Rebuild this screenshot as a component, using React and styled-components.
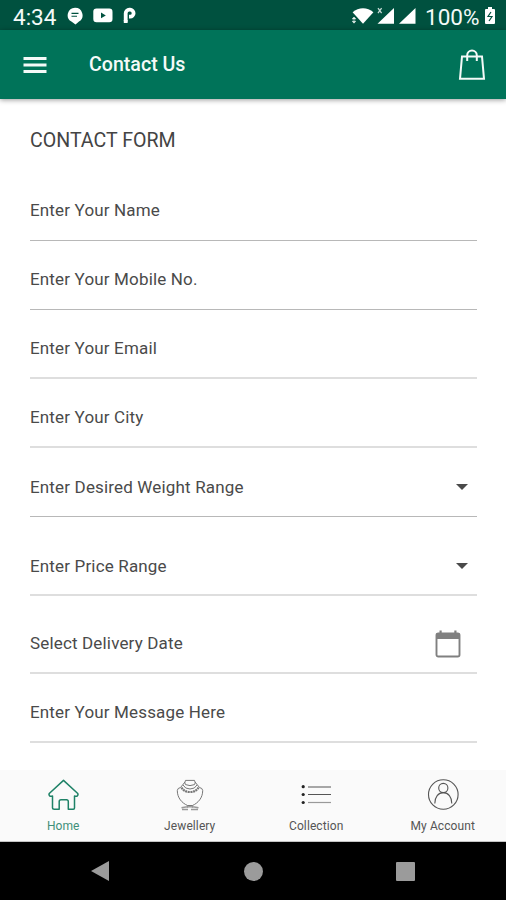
import styled, { createGlobalStyle } from "styled-components";

const fields = [
  { label: "Enter Your Name" },
  { label: "Enter Your Mobile No." },
  { label: "Enter Your Email", soft: true },
  { label: "Enter Your City", soft: true },
  { label: "Enter Desired Weight Range", type: "select" },
  { label: "Enter Price Range", type: "select", height: 79, soft: true },
  { label: "Select Delivery Date", type: "date", height: 78, soft: true },
  { label: "Enter Your Message Here", soft: true },
];

const tabs = [
  { label: "Home", icon: HomeIcon, active: true },
  { label: "Jewellery", icon: JewelleryIcon },
  { label: "Collection", icon: CollectionIcon },
  { label: "My Account", icon: AccountIcon },
];

function ChatIcon() {
  return (
    <svg width="16" height="18" viewBox="0 0 16 18">
      <path d="M8 .8a7.4 7.4 0 0 0-3.6 13.8l4.1 2.9 3.500-3A7.400 7.400 0 0 0 8 .8z" fill="#fff" />
      <path d="M4.500 6.400h7M4.500 9.200h5.500" stroke="#00513f" strokeWidth="1.100" />
    </svg>
  );
}

function VideoIcon() {
  return (
    <svg width="20" height="15" viewBox="0 0 20 15">
      <rect x="0.3" y="0.5" width="19.2" height="13.8" rx="3.2" fill="#fff" />
      <path d="M8 4.6v5.6l4.8-2.8z" fill="#00513f" />
    </svg>
  );
}

function PayIcon() {
  return (
    <svg width="13" height="17" viewBox="0 0 13 17" fill="none" stroke="#fff" strokeWidth="3.800">
      <path d="M2.700 16V6.300A3.600 3.600 0 0 1 6.300 2.700h.8a3.500 3.500 0 0 1 0 7H6" />
      <path d="M.8 13h3.800v1q0 2-1.900 2T.8 14z" fill="#fff" stroke="none" />
    </svg>
  );
}

function SignalIcons() {
  return (
    <svg width="66" height="18" viewBox="0 0 66 18">
      <path d="M1.6 5.2C7.6-.1 16.4-.1 22.4 5.2L12 16.8z" fill="#fff" />
      <path d="M3 10.5v5M1.2 12l1.8-2 1.8 2zM1.2 14.2l1.8 2 1.8-2z" fill="#fff" stroke="#d7e5e1" strokeWidth=".6" />
      <path d="M43 1v15.8H26.5zM64.500 1v15.800H48z" fill="#fff" />
      <path d="M27 1.200l3.600 5M30.600 1.200L27 6.200" stroke="#c7dad5" strokeWidth="1.300" />
    </svg>
  );
}

function BatteryIcon() {
  return (
    <svg width="12" height="18" viewBox="0 0 12 18">
      <path d="M4 0h4v2h2a1 1 0 0 1 1 1v13a1 1 0 0 1-1 1H2a1 1 0 0 1-1-1V3a1 1 0 0 1 1-1h2z" fill="#fff" />
      <path d="M7 5L4 9.500h4L5 14" fill="none" stroke="#00513f" strokeWidth="1.200" />
    </svg>
  );
}

function MenuIcon() {
  return (
    <svg width="24" height="18" viewBox="0 0 24 18">
      <path d="M.500 2.500h23M.500 9h23M.500 15.500h23" stroke="#f4faf8" strokeWidth="2.800" />
    </svg>
  );
}

function BagIcon() {
  return (
    <svg width="28" height="32" viewBox="0 0 28 32" fill="none" stroke="#f4faf8" strokeWidth="2">
      <path d="M4 7.500h20L26 29.800H2z" />
      <path d="M9.200 12V6.300a4.800 4.800 0 0 1 9.600 0V12" />
    </svg>
  );
}

function CalendarIcon() {
  return (
    <svg width="26" height="28" viewBox="0 0 26 28">
      <rect x="1.500" y="3.500" width="23" height="23" rx="1.800" fill="none" stroke="#808080" strokeWidth="1.900" />
      <path d="M1 3.500h24V9H1z" fill="#808080" />
      <path d="M5.600.500v3.500M20.400.500v3.500" stroke="#808080" strokeWidth="2.200" />
    </svg>
  );
}

function HomeIcon() {
  return (
    <svg width="32" height="32" viewBox="0 0 32 32" fill="none" stroke="#1f8267" strokeWidth="1.500" strokeLinejoin="round">
      <path d="M16.500 1.400L30.500 14.300q1 1.300 0 2.400t-3 .300V29q0 1.200-1.200 1.200h-5V22.500q0-1.800-1.800-1.800H14q-1.800 0-1.800 1.800v7.700h-5Q5.500 30.200 5.500 29V17q-2 .8-3-.3t0-2.400z" />
    </svg>
  );
}

function JewelleryIcon() {
  return (
    <svg width="32" height="32" viewBox="0 0 32 32" fill="none" stroke="#777" strokeWidth="1">
      <path d="M11.500 1.400h9M11.500 1.400q-1.500 2.600 0 4.200q4.500 2 9 0q1.500-1.600 0-4.200" />
      <path d="M11 3L6.500 8.500q-3 .500-3.200 3C3.300 19 8 24 13.500 26.500h5C24 24 28.700 19 28.700 11.500Q28.500 9 25.500 8.500L21 3" />
      <path d="M7.500 8.500Q10 13 16 13t8.500-4.500" strokeWidth="2.200" strokeDasharray="2 .6" />
      <path d="M9 6q2 4 7 4t7-4" />
      <path d="M13.500 26.500v2M18.500 26.500v2" />
      <path d="M7.500 28.700q8.500-2 17 0M8 30.500h6M17 30.500h7" strokeWidth="1.500" stroke="#999" />
    </svg>
  );
}

function CollectionIcon() {
  return (
    <svg width="32" height="32" viewBox="0 0 32 32" stroke="#555" strokeWidth="1.200">
      <path d="M8 8h23M8 15.500h23" />
      <path d="M8 23.500h23" stroke="#999" />
      <g fill="#222" stroke="none">
        <circle cx="3.200" cy="7.700" r="1.600" />
        <circle cx="3.200" cy="15.500" r="1.600" />
        <circle cx="3.200" cy="23.500" r="1.600" />
      </g>
    </svg>
  );
}

function AccountIcon() {
  return (
    <svg width="32" height="32" viewBox="0 0 32 32" fill="none" stroke="#555" strokeWidth="1.100">
      <circle cx="16.300" cy="15.500" r="14.800" />
      <circle cx="16.300" cy="9" r="4.600" />
      <path d="M7.800 24.500c0-6.500 3.500-10.900 8.500-10.900s8.500 4.400 8.500 10.900" />
    </svg>
  );
}

const Field = ({ label, type, height, soft }) => (
  <Row $height={height} $soft={soft} $select={type === "select"}>
    <Label>{label}</Label>
    {type === "select" && <Caret />}
    {type === "date" && (
      <DateIcon>
        <CalendarIcon />
      </DateIcon>
    )}
  </Row>
);

const App = () => {
  return (
    <Screen>
      <GlobalStyle />
      <StatusBar>
        <Clock>4:34</Clock>
        <Notifications>
          <ChatIcon />
          <VideoIcon />
          <PayIcon />
        </Notifications>
        <SignalIcons />
        <Percent>100%</Percent>
        <BatteryIcon />
      </StatusBar>
      <AppBar>
        <MenuIcon />
        <Title>Contact Us</Title>
        <BagIcon />
      </AppBar>
      <Form>
        <Heading>CONTACT FORM</Heading>
        {fields.map((field) => (
          <Field key={field.label} {...field} />
        ))}
      </Form>
      <TabBar>
        {tabs.map(({ label, icon: Icon, active }) => (
          <Tab key={label} $active={active}>
            <Icon />
            <TabLabel>{label}</TabLabel>
          </Tab>
        ))}
      </TabBar>
      <SystemBar>
        <svg width="18" height="22" viewBox="0 0 18 22">
          <path d="M18 1v20L0 11z" fill="#9b9b9b" />
        </svg>
        <RoundKey />
        <SquareKey />
      </SystemBar>
    </Screen>
  );
};

const GlobalStyle = createGlobalStyle`
  * {
    box-sizing: border-box;
  }
  body {
    margin: 0;
    background: #fff;
    font-family: Roboto, sans-serif;
  }
  svg {
    display: block;
    flex: none;
  }
`;

const Screen = styled.div`
  display: flex;
  flex-direction: column;
  height: 900px;
  overflow: hidden;
`;

const StatusBar = styled.div`
  display: flex;
  align-items: center;
  height: 30px;
  padding: 1px 10px 0 13px;
  background: #00513f;
  color: #f4faf8;
`;

const Clock = styled.span`
  width: 54px;
  padding-top: 2px;
  font-size: 22.5px;
  line-height: 28px;
`;

const Notifications = styled.div`
  display: flex;
  flex: 1;
  align-items: center;
  gap: 10px;
`;

const Percent = styled.span`
  width: 59px;
  margin-left: 8px;
  padding-top: 2px;
  font-size: 22.5px;
  line-height: 28px;
`;

const AppBar = styled.header`
  display: flex;
  align-items: center;
  height: 69px;
  padding: 0 20px 0 23px;
  background: #007359;
  box-shadow: 0 1px 5px rgba(0, 0, 0, 0.4);
  z-index: 1;
`;

const Title = styled.h1`
  flex: 1;
  margin: 1px 0 0 42px;
  color: #f4faf8;
  font-size: 19.6px;
  font-weight: 500;
  line-height: 24px;
`;

const Form = styled.main`
  flex: 1;
  padding: 30px 29px 0 30px;
`;

const Heading = styled.h2`
  height: 43px;
  margin: 0;
  color: #444;
  font-size: 19.6px;
  font-weight: 400;
  line-height: 24px;
`;

const Row = styled.div`
  display: flex;
  align-items: flex-end;
  justify-content: space-between;
  height: ${({ $height }) => $height || 69}px;
  padding-bottom: ${({ $select, $soft }) => ($select ? 18 : 19) + ($soft ? 0 : 1)}px;
  border-bottom: ${({ $soft }) => ($soft ? "2px solid #dedede" : "1px solid #b8b8b8")};
`;

const Label = styled.span`
  color: #4a4a4a;
  font-size: 17px;
  letter-spacing: 0.16px;
  line-height: 20px;
`;

const Caret = styled.span`
  margin: 0 9px 7px 0;
  border: 6px solid transparent;
  border-top-color: #4a4a4a;
  border-bottom: 0;
`;

const DateIcon = styled.span`
  margin: 0 16px -5px 0;
`;

const TabBar = styled.nav`
  display: grid;
  grid-template-columns: repeat(4, 1fr);
  height: 72px;
  border-bottom: 1px solid #c4c4c4;
  background: #fafafa;
`;

const Tab = styled.div`
  display: flex;
  flex-direction: column;
  align-items: center;
  gap: 8px;
  padding-top: 9px;
  color: ${({ $active }) => ($active ? "#3f8f79" : "#555")};
`;

const TabLabel = styled.span`
  font-size: 12px;
  letter-spacing: 0.1px;
  line-height: 14px;
`;

const SystemBar = styled.footer`
  display: flex;
  align-items: center;
  justify-content: space-between;
  height: 58px;
  padding: 0 91px;
  background: #000;
`;

const RoundKey = styled.span`
  width: 19px;
  height: 19px;
  margin-left: 2px;
  border-radius: 50%;
  background: #9b9b9b;
`;

const SquareKey = styled.span`
  width: 19px;
  height: 19px;
  border-radius: 1px;
  background: #9b9b9b;
`;

export default App;
